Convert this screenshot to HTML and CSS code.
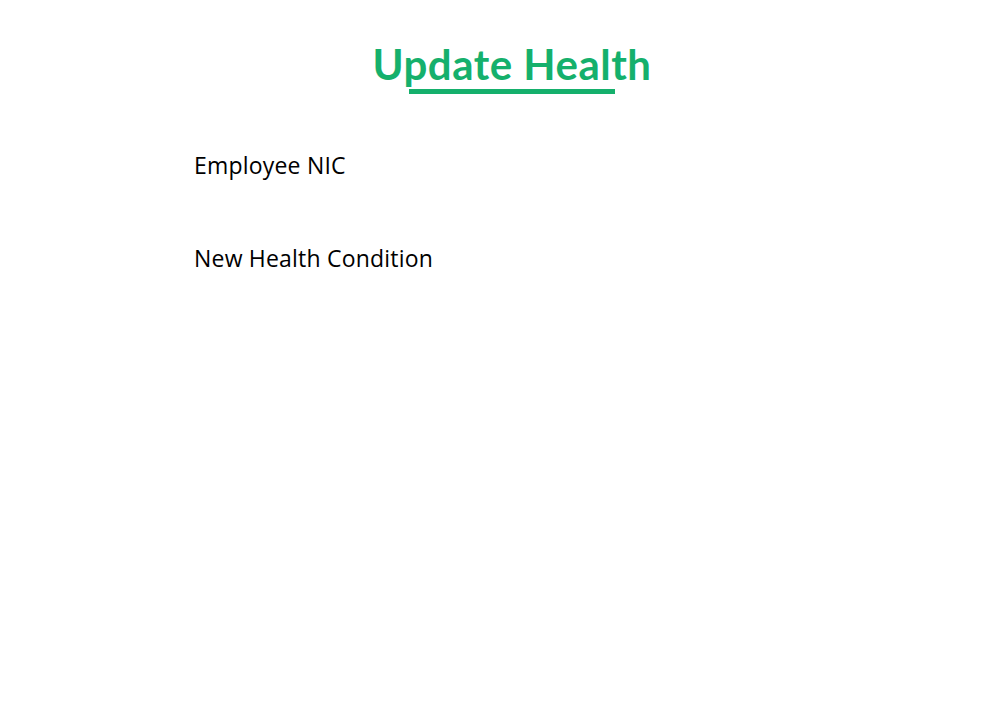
FILE: index.html
```html
<!DOCTYPE html>
<html lang="en">
<head>
<meta charset="utf-8">
<title>Update Health</title>
<link rel="stylesheet" href="styles.css">
</head>
<body>
<main class="page">
  <header class="heading">
    <h1 class="title">Update Health</h1>
    <div class="rule"></div>
  </header>
  <form class="form">
    <label class="field">
      <span class="label">Employee NIC</span>
      <input class="input" type="text">
    </label>
    <label class="field">
      <span class="label">New Health Condition</span>
      <input class="input" type="text">
    </label>
  </form>
</main>
</body>
</html>
```
FILE: styles.css
```css
* { box-sizing: border-box; }
html, body { margin: 0; padding: 0; background: #fff; }
.page {
  width: 636px;
  margin-left: 194px;
  padding-top: 40px;
}
.heading {
  display: flex;
  flex-direction: column;
  align-items: center;
}
.title {
  margin: 0;
  font-family: "Lato", sans-serif;
  font-weight: 700;
  font-size: 42px;
  line-height: 48px;
  color: #15b06c;
  letter-spacing: 0.5px;
}
.rule {
  width: 206px;
  height: 5px;
  background: #15b06c;
  margin-top: 1px;
}
.form {
  display: flex;
  flex-direction: column;
  gap: 61px;
  padding-top: 55px;
}
.field {
  display: flex;
  flex-direction: column;
}
.label {
  font-family: "Open Sans", sans-serif;
  font-size: 23px;
  line-height: 32px;
  letter-spacing: 0.2px;
  color: #000;
}
.input {
  border: none;
  outline: none;
  height: 0;
  padding: 0;
  background: transparent;
}
```
